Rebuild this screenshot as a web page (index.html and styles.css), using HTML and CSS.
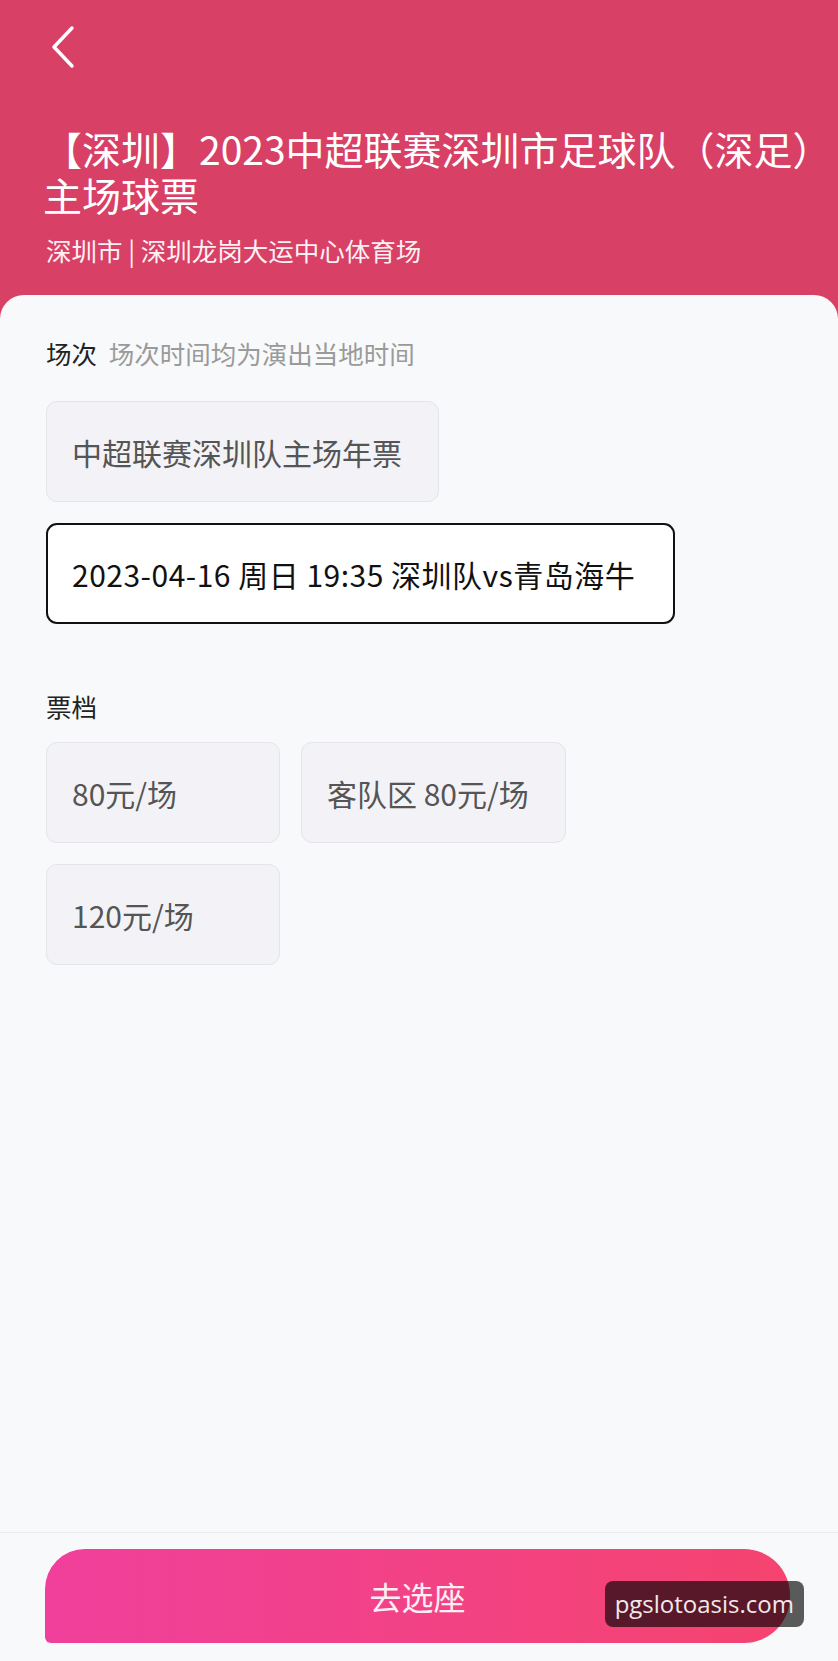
FILE: index.html
```html
<!DOCTYPE html>
<html lang="zh-CN">
<head>
    <meta charset="UTF-8">
    <meta name="viewport" content="width=device-width, initial-scale=1.0">
    <title>选择场次 - 深圳队主场球票</title>
    <link rel="stylesheet" href="styles.css">
</head>
<body>
    <div class="page">
        <div class="header">
            <a class="back" href="#">
                <svg viewBox="0 0 28 44" width="28" height="44">
                    <polyline points="22,3 4,22 22,41" fill="none" stroke="#fff" stroke-width="3.5" stroke-linecap="round" stroke-linejoin="round"/>
                </svg>
            </a>
            <h1 class="title">【深圳】2023中超联赛深圳市足球队（深足）主场球票</h1>
            <p class="venue">深圳市 | 深圳龙岗大运中心体育场</p>
        </div>

        <div class="sheet">
            <div class="content">
                <!-- 场次 -->
                <div class="section-label">场次 <span class="hint">场次时间均为演出当地时间</span></div>
                <div class="session-list">
                    <div class="option">中超联赛深圳队主场年票</div>
                    <div class="option selected">2023-04-16 周日 19:35 深圳队vs青岛海牛</div>
                </div>

                <!-- 票档 -->
                <div class="section-label tier-label">票档</div>
                <div class="tier-list">
                    <div class="option tier">80元/场</div>
                    <div class="option tier">客队区 80元/场</div>
                    <div class="option tier">120元/场</div>
                </div>
            </div>

            <div class="footer">
                <button class="seat-btn">去选座</button>
                <span class="watermark">pgslotoasis.com</span>
            </div>
        </div>
    </div>
</body>
</html>
```

FILE: styles.css
```css
body { margin: 0; font-family: "Noto Sans CJK SC", "Noto Sans", sans-serif; background-color: #f7f9fa; }
.page { min-height: 100vh; display: flex; flex-direction: column; background-color: #d84066; }

/* 顶部信息 */
.header { padding: 25px 14px 29px 46px; color: #fff; }
.back { display: block; width: 28px; height: 44px; margin-left: 4px; }
.back svg { display: block; }
.title { margin: 56px 0 0 -3px; font-size: 39px; line-height: 46px; font-weight: 400; }
.venue { margin: 17px 0 0; font-size: 25.5px; line-height: 32px; color: #fdf0f3; }

/* 内容卡片 */
.sheet {
    flex: 1;
    display: flex;
    flex-direction: column;
    background-color: #f7f9fa;
    border-radius: 24px 24px 0 0;
}
.content { flex: 1; padding: 41px 46px 0; }
.section-label { font-size: 25.5px; line-height: 34px; color: #222; }
.section-label .hint { margin-left: 6px; color: #9a9a9a; }
.tier-label { margin-top: 65px; }

.session-list { display: flex; flex-direction: column; align-items: flex-start; gap: 21px; margin-top: 31px; }
.tier-list { display: flex; flex-wrap: wrap; gap: 21px; margin-top: 19px; }

.option {
    box-sizing: border-box;
    height: 101px;
    display: flex;
    align-items: center;
    padding: 0 36px 0 25px;
    font-size: 30px;
    color: #555;
    background-color: #f3f3f7;
    border: 1px solid #e4e4e9;
    border-radius: 11px;
    white-space: nowrap;
}
.option.selected {
    color: #111;
    background-color: #fff;
    border: 2px solid #111;
    padding: 0 38px 0 24px;
    letter-spacing: 0.5px;
}
.option.tier { min-width: 234px; }

/* 底部按钮 */
.footer { position: relative; padding: 16px 48px 18px 45px; border-top: 1px solid #ececef; }
.seat-btn {
    display: block;
    width: 100%;
    height: 94px;
    border: none;
    border-radius: 40px 46px 46px 6px;
    background: linear-gradient(90deg, #f0409c, #f5446f);
    color: #fdeef3;
    font-family: inherit;
    font-size: 32px;
    cursor: pointer;
}
.watermark {
    position: absolute;
    right: 34px;
    bottom: 34px;
    padding: 0 10px;
    height: 46px;
    line-height: 46px;
    border-radius: 8px;
    background-color: rgba(0, 0, 0, 0.64);
    color: #f1e9ea;
    font-family: "Open Sans", sans-serif;
    font-size: 24px;
}
```
